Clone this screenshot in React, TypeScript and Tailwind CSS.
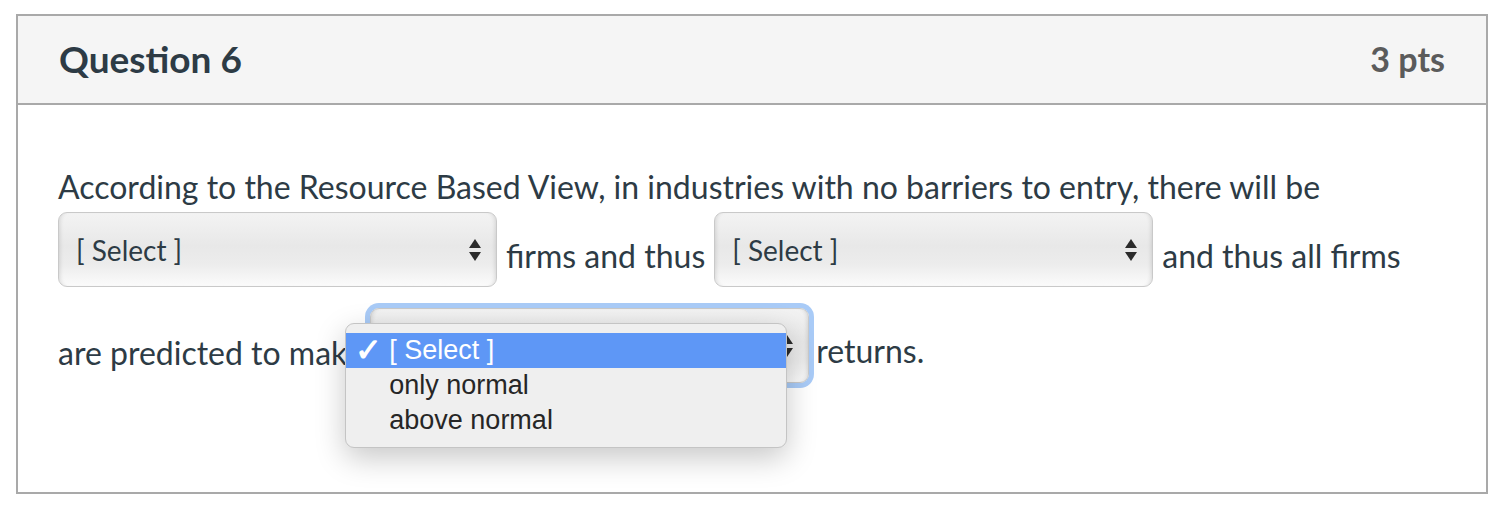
import React from 'react';

const textColor = 'text-[#2d3b45]';

function Arrows() {
  return (
    <svg width="14" height="24" viewBox="0 0 14 24" className="shrink-0">
      <path d="M7 1 L13 10 L1 10 Z" fill="#2b2b2b" />
      <path d="M1 14 L13 14 L7 23 Z" fill="#2b2b2b" />
    </svg>
  );
}

function SelectBox({ label, focused }: { label?: string; focused?: boolean }) {
  return (
    <div
      className={
        'relative flex h-[75px] w-[439px] shrink-0 items-center justify-between rounded-[9px] border border-[#c9c9c9] pl-[17px] pr-[14px] ' +
        'bg-[linear-gradient(to_bottom,#f3f3f3_0%,#e8e8e8_45%,#ececec_70%,#fbfbfb_100%)] shadow-[inset_4px_0_4px_-3px_rgba(0,0,0,0.12),inset_-4px_0_4px_-3px_rgba(0,0,0,0.12)] ' +
        (focused ? 'ring-[5px] ring-[#a9cbf7]' : '')
      }
    >
      <span className={`text-[28px] leading-none ${textColor}`}>{label}</span>
      <Arrows />
      {focused && <Dropdown />}
    </div>
  );
}

function Dropdown() {
  const items = ['[ Select ]', 'only normal', 'above normal'];
  return (
    <div className="absolute left-[-26px] top-[14px] z-10 w-[442px] rounded-[9px] border border-[#c4c4c4] bg-[#efefef] pt-[9px] pb-[9px] shadow-[0_10px_30px_rgba(0,0,0,0.22)] font-['Liberation_Sans',Arial,sans-serif]">
      {items.map((item, i) => (
        <div
          key={item}
          className={
            'relative flex h-[35px] items-center pl-[43px] text-[27px] leading-none ' +
            (i === 0 ? 'bg-[#5e97f6] text-white' : 'text-[#262626]')
          }
        >
          {i === 0 && (
            <span className="absolute left-[9px] top-[1px] text-[32px] font-bold">✓</span>
          )}
          {item}
        </div>
      ))}
    </div>
  );
}

export default function App() {
  return (
    <div className="h-[516px] w-[1508px] bg-white pl-[16px] pt-[14px] font-['Lato','Open_Sans',sans-serif]">
      <div className="h-[480px] w-[1472px] border-2 border-[#a9a9a9]">
        {/* Header */}
        <div className="flex h-[89px] items-center justify-between border-b-2 border-[#a9a9a9] bg-[#f5f5f5] pl-[41px] pr-[41px]">
          <h2 className={`text-[37px] font-bold ${textColor} pb-[2px]`}>Question 6</h2>
          <span className="text-[34px] font-bold text-[#5b5b5b] pb-[2px]">3 pts</span>
        </div>

        {/* Body */}
        <div className={`px-[40px] pt-[66px] text-[32px] leading-none ${textColor}`}>
          <div>According to the Resource Based View, in industries with no barriers to entry, there will be</div>
          <div className="mt-[9px] flex items-end gap-[9px]">
            <SelectBox label="[ Select ]" />
            <span className="mb-[15px]">firms and thus</span>
            <SelectBox label="[ Select ]" />
            <span className="mb-[15px]">and thus all firms</span>
          </div>
          <div className="mt-[21px] flex items-end gap-[7px]">
            <span className="mb-[14px]">are predicted to make</span>
            <SelectBox focused />
            <span className="mb-[16px]">returns.</span>
          </div>
        </div>
      </div>
    </div>
  );
}
